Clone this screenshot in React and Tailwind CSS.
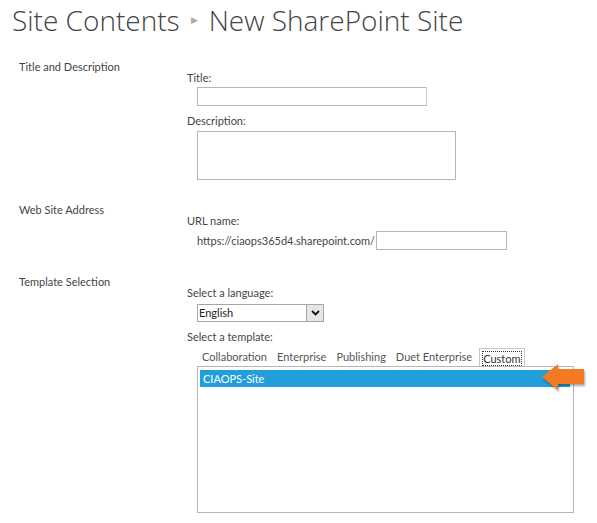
import React from 'react';

const font = { fontFamily: '"Open Sans", "Noto Sans", sans-serif' };

const Arrow = () => (
  <svg width="48" height="32" viewBox="0 0 48 32" className="absolute right-[-15px] top-[-5px]">
    <defs>
      <filter id="sh" x="-20%" y="-20%" width="140%" height="150%">
        <feDropShadow dx="1" dy="2" stdDeviation="1.2" floodColor="#000" floodOpacity="0.35" />
      </filter>
    </defs>
    <path d="M2 15 L18 2 L18 7 L44 7 L44 22 L18 22 L18 28 Z" fill="#f27a24" filter="url(#sh)" />
  </svg>
);

export default function App() {
  return (
    <div className="w-[597px] h-[523px] bg-white text-[#444] overflow-hidden" style={font}>
      <div className="pl-[12px] pt-[1px] text-[28px] leading-[38px] font-light text-[#444] flex items-center">
        <span>Site Contents</span>
        <span className="mx-[11px] text-[9px] text-[#aaa]">&#9654;</span>
        <span>New SharePoint Site</span>
      </div>

      <div className="mt-[20px] text-[11px] leading-[16px]" style={{ fontFamily: 'Lato, "Open Sans", sans-serif' }}>
        {/* Title and Description */}
        <div className="flex">
          <div className="w-[187px] pl-[19px]">Title and Description</div>
          <div className="pt-[11px]">
            <div>Title:</div>
            <div className="mt-[1px] ml-[10px] w-[230px] h-[19px] border border-[#b6b6b6] border-r-[#ccc]" />
            <div className="mt-[7px]">Description:</div>
            <div className="mt-[2px] ml-[10px] w-[259px] h-[49px] border border-[#b6b6b6]" />
          </div>
        </div>

        {/* Web Site Address */}
        <div className="flex mt-[22px]">
          <div className="w-[187px] pl-[19px]">Web Site Address</div>
          <div className="pt-[11px]">
            <div>URL name:</div>
            <div className="mt-[2px] ml-[10px] flex items-center">
              <span>https://ciaops365d4.sharepoint.com/</span>
              <div className="w-[131px] h-[19px] border border-[#b6b6b6] ml-[1px]" />
            </div>
          </div>
        </div>

        {/* Template Selection */}
        <div className="flex mt-[24px]">
          <div className="w-[187px] pl-[19px]">Template Selection</div>
          <div className="pt-[11px]">
            <div>Select a language:</div>
            <div className="mt-[3px] ml-[10px] w-[127px] h-[18px] border border-[#a5a5a5] flex items-center">
              <span className="flex-1 pl-[1px] text-[#222]">English</span>
              <div className="w-[17px] h-[16px] bg-[#e6e6e6] border-l border-[#a5a5a5] flex items-center justify-center">
                <svg width="9" height="6" viewBox="0 0 9 6">
                  <path d="M1 1 L4.5 4.5 L8 1" stroke="#111" strokeWidth="1.8" fill="none" />
                </svg>
              </div>
            </div>
            <div className="mt-[7px]">Select a template:</div>
            <div className="ml-[10px] mt-[2px] flex items-end text-[#555]">
              <span className="pl-[5px] pr-[10px] pb-[1px]">Collaboration</span>
              <span className="pr-[10px] pb-[1px]">Enterprise</span>
              <span className="pr-[10px] pb-[1px]">Publishing</span>
              <span className="pr-[7px] pb-[1px]">Duet Enterprise</span>
              <span className="border border-b-0 border-[#c6c6c6] px-[3px] pt-[2px] bg-white relative top-[1px]">
                <span className="outline outline-1 outline-dotted outline-[#333] text-[#333]">Custom</span>
              </span>
            </div>
            <div className="ml-[10px] w-[377px] h-[147px] border border-[#b6b6b6] pt-[3px] px-[2px] relative">
              <div className="h-[17px] bg-[#229fdb] text-white pl-[3px] leading-[17px] w-[370px]">CIAOPS-Site</div>
              <Arrow />
            </div>
          </div>
        </div>
      </div>
    </div>
  );
}
